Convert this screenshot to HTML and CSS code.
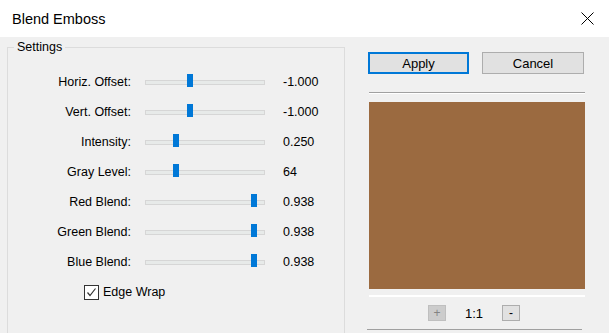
FILE: index.html
```html
<!DOCTYPE html>
<html lang="en">
<head>
  <meta charset="UTF-8">
  <title>Blend Emboss</title>
  <link rel="stylesheet" href="styles.css">
</head>
<body>
  <div class="window">
    <div class="titlebar">
      <span class="title">Blend Emboss</span>
      <svg class="close" width="13" height="13" viewBox="0 0 13 13">
        <path d="M0.5 0.5 L12.5 12.5 M12.5 0.5 L0.5 12.5" stroke="#000" stroke-width="1" fill="none"/>
      </svg>
    </div>

    <div class="content">
      <fieldset class="settings">
        <legend>Settings</legend>
        <div class="rows">
          <label>Horiz. Offset:</label>
          <div class="track"><span class="thumb" style="left: 41px"></span></div>
          <span class="value">-1.000</span>

          <label>Vert. Offset:</label>
          <div class="track"><span class="thumb" style="left: 41px"></span></div>
          <span class="value">-1.000</span>

          <label>Intensity:</label>
          <div class="track"><span class="thumb" style="left: 27px"></span></div>
          <span class="value">0.250</span>

          <label>Gray Level:</label>
          <div class="track"><span class="thumb" style="left: 27px"></span></div>
          <span class="value">64</span>

          <label>Red Blend:</label>
          <div class="track"><span class="thumb" style="left: 105px"></span></div>
          <span class="value">0.938</span>

          <label>Green Blend:</label>
          <div class="track"><span class="thumb" style="left: 105px"></span></div>
          <span class="value">0.938</span>

          <label>Blue Blend:</label>
          <div class="track"><span class="thumb" style="left: 105px"></span></div>
          <span class="value">0.938</span>
        </div>
        <div class="check-row">
          <span class="checkbox">
            <svg width="11" height="11" viewBox="0 0 11 11">
              <path d="M1.5 5.5 L4 8.5 L9.5 1.5" stroke="#333" stroke-width="1.2" fill="none"/>
            </svg>
          </span>
          <span>Edge Wrap</span>
        </div>
      </fieldset>

      <div class="side">
        <div class="buttons">
          <button class="btn default">Apply</button>
          <button class="btn">Cancel</button>
        </div>
        <div class="sep"></div>
        <div class="preview"></div>
        <div class="white-line"></div>
        <div class="zoom">
          <button class="zbtn disabled">+</button>
          <span class="ratio">1:1</span>
          <button class="zbtn">-</button>
        </div>
        <div class="bottom-line"></div>
      </div>
    </div>
  </div>
</body>
</html>
```

FILE: styles.css
```css
body {
  margin: 0;
  font-family: "Liberation Sans", Arial, sans-serif;
  font-size: 12.5px;
  color: #000;
  background: #f0f0f0;
}

.window {
  width: 609px;
  height: 333px;
  overflow: hidden;
}

.titlebar {
  height: 37px;
  background: #fff;
  display: flex;
  align-items: center;
  justify-content: space-between;
  padding: 0 15px 0 12px;
}

.title {
  font-size: 14.5px;
  padding-top: 1px;
}

.close {
  display: block;
}

.content {
  display: flex;
  padding-left: 7px;
}

.settings {
  width: 336px;
  margin: 3px 0 0 0;
  padding: 13px 0 0 0;
  border: 1px solid #dcdcdc;
  height: 300px;
}

.settings legend {
  margin-left: 6px;
  padding: 0 3px;
  line-height: 14px;
}

.rows {
  display: grid;
  grid-template-columns: 123px 120px auto;
  grid-auto-rows: 30px;
  column-gap: 14px;
  align-items: center;
}

.rows label {
  text-align: right;
}

.track {
  position: relative;
  height: 3px;
  background: #e7eae9;
  border: 1px solid #d6d6d6;
}

.thumb {
  position: absolute;
  top: -7px;
  width: 6px;
  height: 13px;
  background: #0078d7;
}

.value {
  padding-left: 4px;
}

.check-row {
  display: flex;
  align-items: center;
  gap: 4px;
  height: 30px;
  padding-left: 76px;
}

.checkbox {
  width: 13px;
  height: 13px;
  border: 1px solid #333;
  background: #fff;
  display: flex;
  align-items: center;
  justify-content: center;
}

.side {
  margin-left: 23px;
  width: 217px;
  padding-top: 15px;
}

.buttons {
  display: flex;
  gap: 13px;
}

.btn {
  font-family: inherit;
  font-size: 13px;
  height: 22px;
  width: 102px;
  background: #e1e1e1;
  border: 1px solid #adadad;
  padding: 0;
  color: #000;
}

.btn.default {
  width: 101px;
  border: 2px solid #0078d7;
}

.sep {
  margin: 18px 0 0 1px;
  height: 1px;
  background: #a0a0a0;
  border-bottom: 1px solid #fff;
}

.preview {
  margin: 8px 0 0 1px;
  height: 187px;
  background: #9b6a40;
}

.white-line {
  margin: 6px 0 0 1px;
  height: 2px;
  background: #fff;
}

.zoom {
  display: flex;
  align-items: center;
  justify-content: center;
  height: 16px;
  margin-top: 8px;
  gap: 19px;
  padding-right: 5px;
}

.ratio {
  font-size: 13px;
}

.zbtn {
  width: 18px;
  height: 16px;
  padding: 0;
  font-family: inherit;
  font-size: 12px;
  line-height: 12px;
  background: #e1e1e1;
  border: 1px solid #adadad;
  color: #000;
}

.zbtn.disabled {
  background: #cccccc;
  border-color: #bfbfbf;
  color: #838383;
}

.bottom-line {
  margin: 8px 0 0 -1px;
  width: 215px;
  height: 1px;
  background: #a0a0a0;
}
```
